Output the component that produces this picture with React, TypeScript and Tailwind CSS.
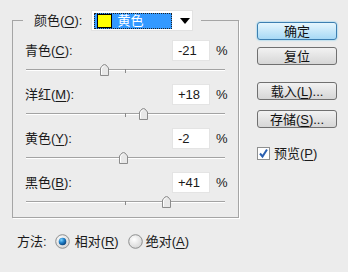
import React from "react";

type Channel = {
  name: string;
  key: string;
  value: number;
};

const channels: Channel[] = [
  { name: "青色", key: "C", value: -21 },
  { name: "洋红", key: "M", value: 18 },
  { name: "黄色", key: "Y", value: -2 },
  { name: "黑色", key: "B", value: 41 },
];

const Key = ({ children }: { children: React.ReactNode }) => (
  <span className="underline underline-offset-[2px] decoration-1">{children}</span>
);

const Thumb = () => (
  <svg width="9" height="12" viewBox="0 0 9 12">
    <path
      d="M0.5 11.5 V4 L3 1 Q4.5 0 6 1 L8.5 4 V11.5 Z"
      fill="#e8e8e8"
      stroke="#8c8c8c"
    />
    <path d="M1.5 10.5 V4.5 L3.5 2" fill="none" stroke="#fff" />
  </svg>
);

const Slider = ({ value }: { value: number }) => (
  <div className="relative mt-[3px] ml-[1px] h-[12px] w-[199px]">
    <div className="absolute left-0 right-0 top-[5px] h-0 border-t border-[#a3a3a3] shadow-[0_1px_0_#fff]" />
    <div className="absolute left-[99px] top-[5px] h-[4px] w-px bg-[#8a8a8a]" />
    <div className="absolute top-0" style={{ left: 99 + value - 4 }}>
      <Thumb />
    </div>
  </div>
);

const Radio = ({ checked }: { checked?: boolean }) => (
  <svg width="15" height="15" viewBox="0 0 15 15">
    <defs>
      <radialGradient id="rbg" cx="0.4" cy="0.35" r="0.7">
        <stop offset="0" stopColor="#ffffff" />
        <stop offset="1" stopColor="#d4d4d4" />
      </radialGradient>
      <radialGradient id="rdot" cx="0.35" cy="0.3" r="0.75">
        <stop offset="0" stopColor="#7fd4ff" />
        <stop offset="0.5" stopColor="#1e7fc8" />
        <stop offset="1" stopColor="#0c3f75" />
      </radialGradient>
    </defs>
    <circle cx="7.5" cy="7.5" r="6.8" fill="url(#rbg)" stroke="#8e8f8f" strokeWidth="1" />
    {checked && <circle cx="7.5" cy="7.5" r="3.8" fill="url(#rdot)" />}
  </svg>
);

const Button = ({ children, primary }: { children: React.ReactNode; primary?: boolean }) => (
  <button
    className={
      primary
        ? "flex h-[18px] w-[80px] items-center justify-center rounded-[3px] border border-[#3c7fb1] bg-gradient-to-b from-[#e5f6fd] to-[#a7d9f5] text-[#111] shadow-[0_0_2px_#5cc6f2]"
        : "flex h-[18px] w-[80px] items-center justify-center rounded-[3px] border border-[#707070] bg-gradient-to-b from-[#f2f2f2] to-[#d6d6d6] text-[#111]"
    }
  >
    {children}
  </button>
);

export default function App() {
  return (
    <div className="flex h-[272px] w-[348px] bg-[#ececec] font-['Liberation_Sans','Noto_Sans_CJK_SC',sans-serif] text-[13px] leading-none text-[#1a1a1a]">
      {/* Left side */}
      <div className="pl-[12px] pt-[10px]">
        <fieldset className="w-[227px] border border-[#a5a5a5] pl-[12px] pt-[9px] pb-[9px] shadow-[1px_1px_0_#fff]">
          <legend className="-ml-[2px] flex items-center pl-[11px] pr-[8px]">
            <span>
              颜色(<Key>O</Key>):
            </span>
            <div className="ml-[9px] flex h-[21px] w-[102px] items-center border border-[#e2e2e2] bg-white">
              <div className="ml-[2px] flex h-[16px] w-[78px] items-center border border-dotted border-[#222] bg-[#3399ff]">
                <div className="ml-[2px] h-[14px] w-[15px] border border-black bg-[#ffff00]" />
                <span className="ml-[5px] text-white">黄色</span>
              </div>
              <svg className="ml-[8px]" width="10" height="6" viewBox="0 0 10 6">
                <path d="M0 0 H10 L5 6 Z" fill="#000" />
              </svg>
            </div>
          </legend>

          <div className="flex flex-col gap-[8px]">
            {channels.map((ch) => (
              <div key={ch.key} className="flex flex-col">
                <div className="flex h-[21px] items-center">
                  <span className="w-[147px]">
                    {ch.name}(<Key>{ch.key}</Key>):
                  </span>
                  <div className="flex h-[21px] w-[38px] items-center border border-[#e4e4e4] bg-white pl-[5px]">
                    {ch.value > 0 ? `+${ch.value}` : ch.value}
                  </div>
                  <span className="ml-[6px]">%</span>
                </div>
                <Slider value={ch.value} />
              </div>
            ))}
          </div>
        </fieldset>

        {/* Method */}
        <div className="mt-[15px] flex h-[16px] items-center pl-[5px]">
          <span>方法:</span>
          <span className="ml-[8px] flex items-center">
            <Radio checked />
          </span>
          <span className="ml-[5px]">
            相对(<Key>R</Key>)
          </span>
          <span className="ml-[9px] flex items-center">
            <Radio />
          </span>
          <span className="ml-[3px]">
            绝对(<Key>A</Key>)
          </span>
        </div>
      </div>

      {/* Right side */}
      <div className="ml-[18px] flex flex-col pt-[22px]">
        <Button primary>确定</Button>
        <div className="mt-[7px]">
          <Button>复位</Button>
        </div>
        <div className="mt-[17px]">
          <Button>
            载入(<Key>L</Key>)...
          </Button>
        </div>
        <div className="mt-[10px]">
          <Button>
            存储(<Key>S</Key>)...
          </Button>
        </div>
        <div className="mt-[19px] flex items-center">
          <svg width="13" height="13" viewBox="0 0 13 13">
            <rect x="0.5" y="0.5" width="12" height="12" fill="#fff" stroke="#8e8f8f" />
            <path d="M3 6.5 L5.5 9.5 L10 2.5" fill="none" stroke="#2a5fb0" strokeWidth="2" />
          </svg>
          <span className="ml-[4px]">
            预览(<Key>P</Key>)
          </span>
        </div>
      </div>
    </div>
  );
}
